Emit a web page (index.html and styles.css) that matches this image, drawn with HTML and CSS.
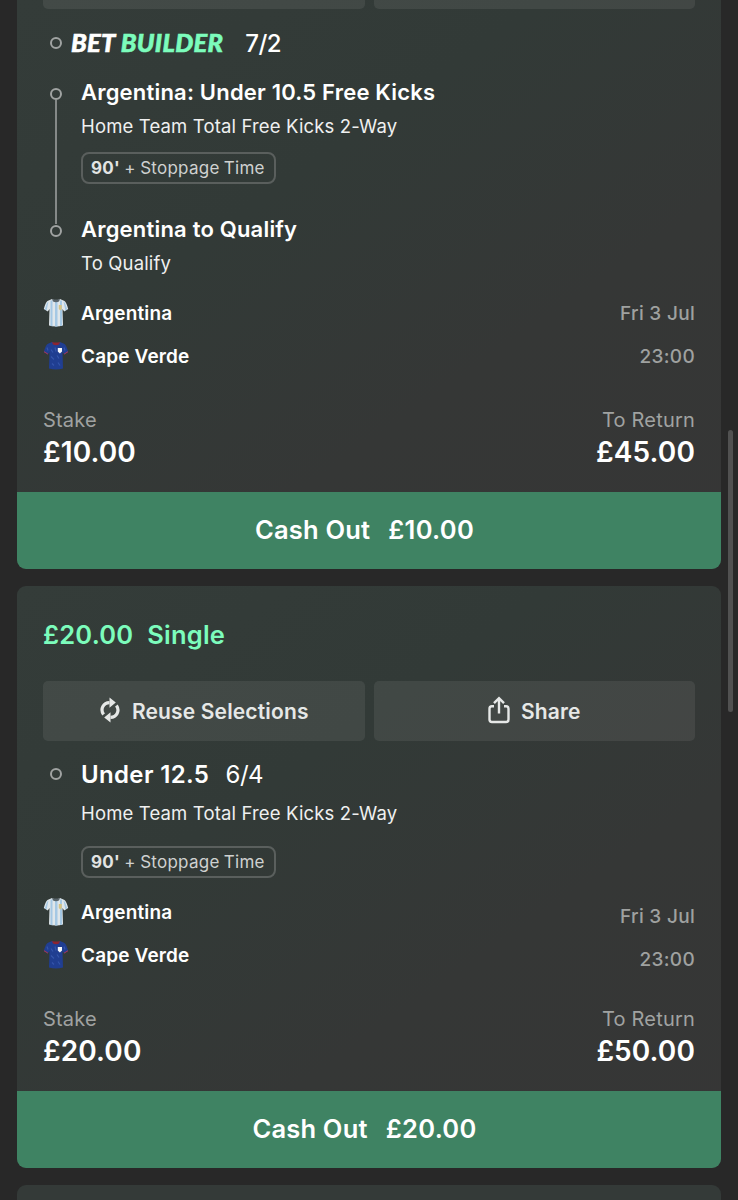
FILE: index.html
```html
<!DOCTYPE html>
<html lang="en">
  <head>
    <meta charset="utf-8">
    <meta name="viewport" content="width=device-width, initial-scale=1">
    <title>My Bets</title>
    <link rel="stylesheet" href="styles.css">
  </head>
  <body>
    <!-- shared shirt icons -->
    <svg class="defs" width="0" height="0">
      <symbol id="shirt-arg" viewBox="0 0 26 28">
        <path d="M9 .5 L4.500 2.500 Q2.500 4 .8 10.500 L4.800 13 L6.500 10.500 L6 27 Q13 29 20 27 L19.500 10.500 L21.200 13 L25.200 10.500 Q23.500 4 21.500 2.500 L17 .5 Q13 3 9 .5Z" fill="#dfe6ea"/>
        <path d="M7.500 2 L9.500 2 L9.500 27.700 L7.500 27.400Z M12 3 L14.500 3 L14.500 28 L12 28Z M17 2 L19 2 L19 27.200 L17 27.600Z M4 4.500 L5.500 3 L3.600 12 L1.800 11Z M20.500 3 L22 4.500 L24.200 11 L22.400 12Z" fill="#a5c8e4"/>
        <path d="M9 .5 Q13 1.500 17 .5 L16 3 Q13 4.300 10 3Z" fill="#59646a"/>
        <path d="M15.800 6.500 h3 v4 l-1.500 1.500 l-1.500 -1.500Z" fill="#d5c486"/>
      </symbol>
      <symbol id="shirt-cpv" viewBox="0 0 26 28">
        <path d="M9 .5 L4.500 2.500 Q2.500 4 .8 10.500 L4.800 13 L6.500 10.500 L6 27 Q13 29 20 27 L19.500 10.500 L21.200 13 L25.200 10.500 Q23.500 4 21.500 2.500 L17 .5 Q13 3 9 .5Z" fill="#203e91"/>
        <path d="M8 8 l2 3 M12 6 l1 4 M8 15 l3 3 M14 14 l2 3 M9 22 l2 2 M15 21 l2 3 M4 6 l1 3 M21 6 l1 3" stroke="#3455aa" stroke-width="1.200" fill="none"/>
        <path d="M1 10.200 L4.900 12.600 M25 10.200 L21.100 12.600" stroke="#b03550" stroke-width="1"/>
        <path d="M9 .5 Q13 1.500 17 .5 L16 3 Q13 4.300 10 3Z" fill="#8c2431"/>
        <path d="M14.800 6.500 h4.200 v3.500 l-2.100 2 l-2.100 -2Z" fill="#f4f6fa"/>
      </symbol>
    </svg>

    <main class="bets">
      <article class="card card-first">
        <div class="actions actions-cut">
          <div class="btn"></div>
          <div class="btn"></div>
        </div>

        <div class="builder">
          <span class="rail"><i class="dot"></i></span>
          <span class="logo"><span class="logo-bet">BET</span> <span class="logo-builder">BUILDER</span></span>
          <span class="odds">7/2</span>
        </div>

        <div class="leg">
          <span class="rail"><i class="dot"></i><i class="line"></i></span>
          <div class="leg-body">
            <h3>Argentina: Under 10.5 Free Kicks</h3>
            <p class="market">Home Team Total Free Kicks 2-Way</p>
            <span class="tag"><b>90'</b> + Stoppage Time</span>
          </div>
        </div>
        <div class="leg leg-last">
          <span class="rail"><i class="dot"></i></span>
          <div class="leg-body">
            <h3>Argentina to Qualify</h3>
            <p class="market">To Qualify</p>
          </div>
        </div>

        <div class="fixture">
          <div class="team"><svg class="shirt"><use href="#shirt-arg"/></svg>Argentina<span class="when">Fri 3 Jul</span></div>
          <div class="team"><svg class="shirt"><use href="#shirt-cpv"/></svg>Cape Verde<span class="when">23:00</span></div>
        </div>

        <div class="money">
          <div><p class="label">Stake</p><p class="amount">£10.00</p></div>
          <div class="return"><p class="label">To Return</p><p class="amount">£45.00</p></div>
        </div>
        <div class="cashout"><span>Cash Out</span><span class="value">£10.00</span></div>
      </article>

      <article class="card">
        <h2><span>£20.00</span><span>Single</span></h2>
        <div class="actions">
          <div class="btn">
            <svg class="ico-reuse" viewBox="0 0 20 26">
              <path d="M3.600 17.500 C-.2 12 3.500 5.700 9.500 5.600 M16.400 8.500 C20.200 14 16.500 20.300 10.500 20.400" fill="none" stroke="#e6e8e7" stroke-width="3.200"/>
              <path d="M9.500 .5 L15.800 5.600 L9.500 10.700Z M10.500 15.300 L4.200 20.400 L10.500 25.500Z" fill="#e6e8e7"/>
            </svg>
            Reuse Selections
          </div>
          <div class="btn">
            <svg class="ico-share" viewBox="0 0 22 28">
              <path d="M6 10.200 H4 Q1.500 10.200 1.500 12.700 V23.500 Q1.500 26 4 26 H18 Q20.500 26 20.500 23.500 V12.700 Q20.500 10.200 18 10.200 H16 M11 17.500 V3 M6 7.200 L11 2.200 L16 7.200" fill="none" stroke="#e6e8e7" stroke-width="2.400"/>
            </svg>
            Share
          </div>
        </div>

        <div class="leg leg-single">
          <span class="rail"><i class="dot"></i></span>
          <div class="leg-body">
            <h3>Under 12.5 <span class="odds">6/4</span></h3>
            <p class="market">Home Team Total Free Kicks 2-Way</p>
            <span class="tag"><b>90'</b> + Stoppage Time</span>
          </div>
        </div>

        <div class="fixture fixture-single">
          <div class="team"><svg class="shirt"><use href="#shirt-arg"/></svg>Argentina<span class="when">Fri 3 Jul</span></div>
          <div class="team"><svg class="shirt"><use href="#shirt-cpv"/></svg>Cape Verde<span class="when">23:00</span></div>
        </div>

        <div class="money">
          <div><p class="label">Stake</p><p class="amount">£20.00</p></div>
          <div class="return"><p class="label">To Return</p><p class="amount">£50.00</p></div>
        </div>
        <div class="cashout"><span>Cash Out</span><span class="value">£20.00</span></div>
      </article>

      <article class="card card-next"></article>
    </main>
    <div class="scrollbar"></div>
  </body>
</html>
```
FILE: styles.css
```css
* { box-sizing: border-box; }
body { margin: 0; height: 1200px; overflow: hidden; background: #282828; color: #fff; font-family: Inter, "Liberation Sans", sans-serif; }
h2, h3, p { margin: 0; }
.defs { position: absolute; }

.bets { display: flex; flex-direction: column; gap: 17px; width: 704px; margin-left: 17px; }
.card { flex: none; border-radius: 9px; overflow: hidden; background: linear-gradient(145deg, #343c39 0%, #323a37 35%, #353736 65%, #363636 100%); }
.card-first { border-radius: 0 0 9px 9px; }
.card-next { height: 40px; background: #343a38; }

h2 { display: flex; gap: 14px; height: 40px; line-height: 38px; margin: 30px 26px 25px; font-size: 25.5px; font-weight: 600; letter-spacing: 0.2px; color: #7cfcbc; }

.actions { display: flex; gap: 9px; margin: 0 26px; }
.btn { flex: 1; display: flex; align-items: center; justify-content: center; height: 60px; border-radius: 5px; background: rgba(255, 255, 255, 0.075); color: #e6e8e7; font-size: 21px; font-weight: 600; letter-spacing: 0.15px; }
.actions-cut .btn { height: 9px; border-radius: 0 0 5px 5px; }
.ico-reuse { width: 20px; height: 26px; margin: 0 12px 2px 1px; }
.ico-share { width: 22px; height: 28px; margin: 0 11px 2px 0; }

.rail { flex: none; display: flex; flex-direction: column; align-items: center; width: 26px; }
.dot { flex: none; width: 12px; height: 12px; border: 2px solid #a0a3a2; border-radius: 50%; }
.line { flex: 1; width: 2px; margin-bottom: -12px; background: #858988; }

.builder { display: flex; align-items: center; height: 33px; margin: 17px 26px 16px; }
.logo { margin-left: 2px; padding-bottom: 2px; font-family: Lato, sans-serif; font-size: 25.5px; font-weight: 900; font-style: italic; letter-spacing: 0.3px; -webkit-text-stroke: 0.6px currentColor; }
.logo-builder { color: #7cfcbc; }
.odds { font-size: 24px; font-weight: 500; letter-spacing: -0.6px; }
.builder .odds { margin-left: 22px; padding-top: 2px; }

.leg { display: flex; gap: 12px; margin: 0 26px; }
.leg .rail { padding-top: 13px; }
.leg-body { padding-bottom: 28px; }
.leg-last .leg-body { padding-bottom: 0; }
h3 { height: 35px; line-height: 34px; font-size: 22px; font-weight: 600; letter-spacing: 0.2px; }
.market { height: 32px; line-height: 32px; font-size: 18.5px; letter-spacing: 0.15px; color: #eff0f0; }
.tag { display: block; width: 195px; height: 32px; line-height: 29px; margin-top: 10px; padding-left: 8px; border: 2px solid #5a5f5d; border-radius: 8px; font-size: 17px; letter-spacing: 0.25px; word-spacing: -0.7px; white-space: nowrap; color: #cfd1d0; }
.tag b { font-weight: 700; color: #e2e4e3; }

.leg-single { margin-top: 17px; }
.leg-single .rail { padding-top: 10px; }
.leg-single .leg-body { padding-bottom: 0; }
.leg-single h3 { height: 34px; font-size: 24px; letter-spacing: 0.35px; }
.leg-single .odds { margin-left: 10px; font-weight: 400; letter-spacing: -0.6px; }
.leg-single .market { margin-top: 5px; }
.leg-single .tag { margin-top: 17px; }

.fixture { margin: 13px 26px 30px; }
.team { display: flex; align-items: center; height: 43px; font-size: 19px; font-weight: 600; letter-spacing: 0.15px; }
.shirt { width: 26px; height: 29px; margin: 0 12px 2px 0; }
.when { margin-left: auto; font-size: 19px; font-weight: 500; letter-spacing: 0.3px; color: #9fa1a0; }
.fixture-single .when { padding-top: 7px; }

.money { display: flex; justify-content: space-between; margin: 0 26px 18px; }
.return { text-align: right; }
.label { height: 24px; line-height: 24px; font-size: 20px; letter-spacing: 0.2px; color: #a0a2a1; }
.amount { height: 42px; line-height: 41px; font-size: 28px; font-weight: 600; letter-spacing: 0.1px; }

.cashout { display: flex; align-items: center; justify-content: center; gap: 18px; height: 77px; padding: 0 9px 2px 0; background: #3f8363; font-size: 25.5px; font-weight: 600; letter-spacing: 0.2px; }
.value { letter-spacing: 0.3px; }

.scrollbar { position: fixed; top: 430px; left: 728px; width: 5px; height: 282px; border-radius: 3px; background: #515151; }
```
